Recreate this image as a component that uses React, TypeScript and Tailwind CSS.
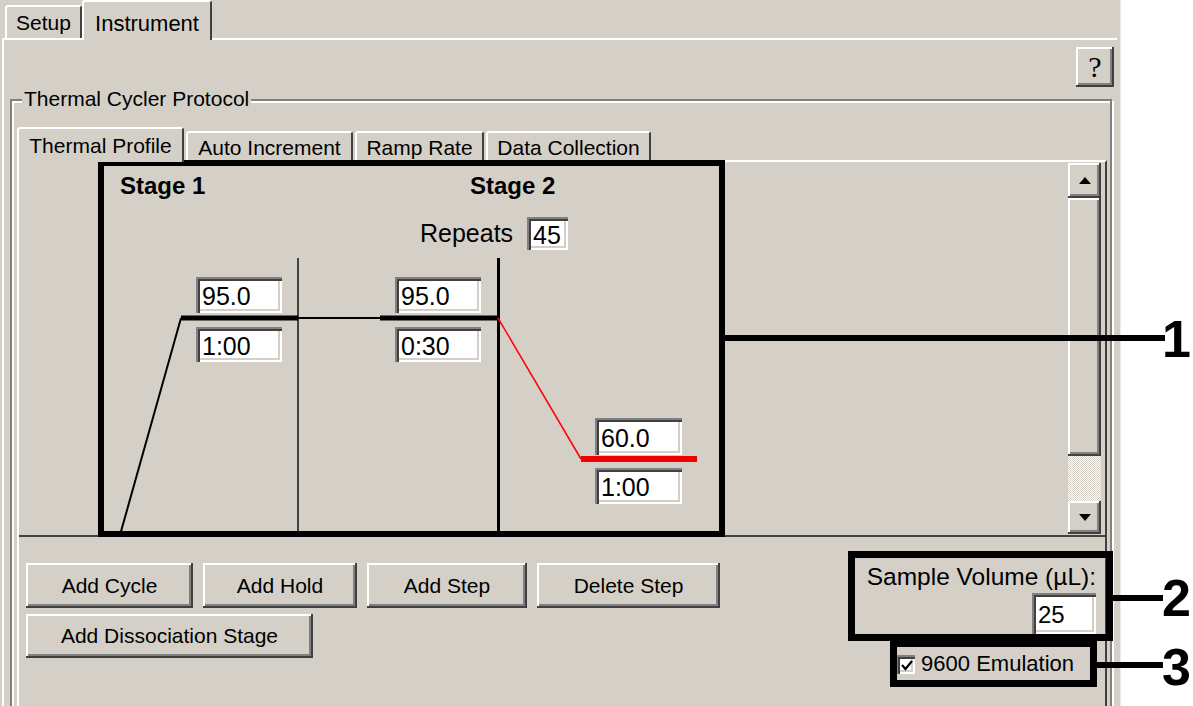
import React from 'react';

// Windows-classic bevels used throughout the dialog
const raised =
  'bg-[#d4d0c8] shadow-[inset_-2px_-2px_0_#404040,inset_2px_2px_0_#ffffff,inset_-4px_-4px_0_#808080]';
const sunken =
  'bg-white shadow-[inset_2px_2px_0_#808080,inset_4px_4px_0_#404040,inset_-2px_-2px_0_#ffffff,inset_-4px_-4px_0_#d4d0c8]';

function Field({ value, pos }: { value: string; pos: string }) {
  return (
    <div className={`absolute flex items-center pl-[6px] pt-[3px] text-[25px] leading-none text-black ${sunken} ${pos}`}>
      {value}
    </div>
  );
}

function Btn({ label, w }: { label: string; w: string }) {
  return (
    <button className={`flex items-center justify-center text-[21px] text-black ${raised} ${w}`}>
      {label}
    </button>
  );
}

function Arrow({ down }: { down?: boolean }) {
  return (
    <svg width="12" height="7" viewBox="0 0 12 7">
      <polygon points={down ? '0,0 12,0 6,7' : '0,7 12,7 6,0'} fill="#000" />
    </svg>
  );
}

function ProfileCanvas() {
  return (
    <div className="relative flex-1">
      <svg className="absolute inset-0" width="1050" height="373">
        <line x1="101" y1="373" x2="162" y2="156" stroke="#000" strokeWidth="2" />
        <line x1="279" y1="96" x2="279" y2="373" stroke="#444" strokeWidth="2" />
        <line x1="479.5" y1="96" x2="479.5" y2="373" stroke="#000" strokeWidth="3" />
        <line x1="162" y1="156" x2="279" y2="156" stroke="#000" strokeWidth="5" />
        <line x1="279" y1="156" x2="361" y2="156" stroke="#000" strokeWidth="2" />
        <line x1="361" y1="156" x2="479" y2="156" stroke="#000" strokeWidth="5" />
        <line x1="479" y1="156" x2="562" y2="297" stroke="#ff0000" strokeWidth="1.5" />
        <line x1="562" y1="297" x2="678" y2="297" stroke="#ee0000" strokeWidth="6" />
      </svg>

      <div className="absolute left-[101px] top-[12px] text-[24px] font-bold leading-none">Stage 1</div>
      <div className="absolute left-[451px] top-[12px] text-[24px] font-bold leading-none">Stage 2</div>
      <div className="absolute left-[401px] top-[59px] text-[25px] leading-none">Repeats</div>
      <Field value="45" pos="left-[508px] top-[55px] w-[41px] h-[33px]" />

      <Field value="95.0" pos="left-[177px] top-[115px] w-[86px] h-[36px]" />
      <Field value="1:00" pos="left-[177px] top-[165px] w-[86px] h-[35px]" />
      <Field value="95.0" pos="left-[376px] top-[115px] w-[86px] h-[36px]" />
      <Field value="0:30" pos="left-[376px] top-[165px] w-[86px] h-[35px]" />
      <Field value="60.0" pos="left-[576px] top-[256px] w-[87px] h-[37px]" />
      <Field value="1:00" pos="left-[576px] top-[306px] w-[87px] h-[36px]" />
    </div>
  );
}

function ScrollBar() {
  return (
    <div className="flex w-[33px] flex-col py-[1px] mr-[4px]">
      <div className={`flex h-[35px] items-center justify-center ${raised}`}>
        <Arrow />
      </div>
      <div className={`h-[258px] ${raised}`} />
      <div className="flex-1 bg-[repeating-conic-gradient(#ffffff_0_25%,#d4d0c8_0_50%)] bg-[length:2px_2px]" />
      <div className={`flex h-[33px] items-center justify-center ${raised}`}>
        <Arrow down />
      </div>
    </div>
  );
}

function Callouts() {
  return (
    <>
      <div className="absolute left-[98px] top-[160px] h-[377px] w-[627px] border-[6px] border-black" />
      <div className="absolute left-[725px] top-[335px] h-[6px] w-[440px] bg-black" />
      <div className="absolute left-[1162px] top-[313px] text-[52px] font-bold leading-none">1</div>

      <div className="absolute left-[848px] top-[551px] h-[90px] w-[265px] border-[7px] border-black" />
      <div className="absolute left-[1113px] top-[595px] h-[6px] w-[50px] bg-black" />
      <div className="absolute left-[1162px] top-[572px] text-[52px] font-bold leading-none">2</div>

      <div className="absolute left-[890px] top-[640px] h-[47px] w-[207px] border-[7px] border-black" />
      <div className="absolute left-[1097px] top-[662px] h-[6px] w-[66px] bg-black" />
      <div className="absolute left-[1162px] top-[641px] text-[52px] font-bold leading-none">3</div>
    </>
  );
}

export default function App() {
  return (
    <div className="relative h-[706px] w-[1193px] overflow-hidden bg-white font-['Liberation_Sans',Arial,sans-serif] text-black">
      <div className="flex h-full w-[1121px] flex-col border-r border-[#ecebe7] bg-[#d4d0c8] pl-[2px]">
        {/* top tabs */}
        <div className="flex h-[38px] items-end pl-[3px]">
          <div className="flex h-[33px] w-[77px] items-center justify-center rounded-t-[3px] border-l-2 border-t-2 border-r-2 border-white border-r-[#404040] text-[21px]">
            Setup
          </div>
          <div className="relative z-10 -mb-[2px] flex h-[40px] w-[130px] items-start justify-center rounded-t-[3px] border-l-2 border-t-2 border-r-2 border-white border-r-[#404040] bg-[#d4d0c8] pt-[5px] text-[22px]">
            Instrument
          </div>
        </div>

        {/* instrument pane */}
        <div className="mr-[3px] flex flex-1 flex-col border-l-2 border-t-2 border-white">
          <div className="flex justify-end pr-[3px] pt-[7px]">
            <button className={`flex h-[40px] w-[38px] items-center justify-center font-['Liberation_Serif',serif] text-[30px] leading-none ${raised}`}>
              ?
            </button>
          </div>

          <div className="relative -mb-[20px] ml-[6px] mr-[5px] mt-[12px] flex flex-1 flex-col border-2 border-[#808080] pl-[5px] pr-[3px] pt-[26px] shadow-[inset_2px_2px_0_#ffffff,2px_2px_0_#ffffff]">
            <div className="absolute -top-[14px] left-[10px] bg-[#d4d0c8] px-[2px] text-[21px] leading-[24px]">
              Thermal Cycler Protocol
            </div>

            {/* inner tabs */}
            <div className="flex h-[33px] items-end">
              <div className="relative z-10 -mb-[2px] flex h-[35px] w-[167px] items-center justify-center rounded-t-[3px] border-l-2 border-t-2 border-r-2 border-white border-r-[#404040] bg-[#d4d0c8] text-[21px]">
                Thermal Profile
              </div>
              <div className="ml-[2px] flex h-[29px] w-[167px] items-center justify-center rounded-t-[3px] border-l-2 border-t-2 border-r-2 border-white border-r-[#404040] pt-[3px] text-[21px]">
                Auto Increment
              </div>
              <div className="ml-[2px] flex h-[29px] w-[129px] items-center justify-center rounded-t-[3px] border-l-2 border-t-2 border-r-2 border-white border-r-[#404040] pt-[3px] text-[21px]">
                Ramp Rate
              </div>
              <div className="ml-[2px] flex h-[29px] w-[165px] items-center justify-center rounded-t-[3px] border-l-2 border-t-2 border-r-2 border-white border-r-[#404040] pt-[3px] text-[21px]">
                Data Collection
              </div>
            </div>

            {/* thermal profile pane */}
            <div className="flex flex-1 flex-col border-l-2 border-r-2 border-t-2 border-white border-r-[#404040]">
              <div className="flex h-[375px] border-b-2 border-[#404040]">
                <ProfileCanvas />
                <ScrollBar />
              </div>

              <div className="flex items-start justify-between pl-[7px] pr-[9px] pt-[26px]">
                <div className="flex flex-col gap-[6px]">
                  <div className="flex gap-[10px]">
                    <Btn label="Add Cycle" w="h-[45px] w-[167px]" />
                    <Btn label="Add Hold" w="h-[45px] w-[154px]" />
                    <Btn label="Add Step" w="h-[45px] w-[160px]" />
                    <Btn label="Delete Step" w="h-[45px] w-[183px]" />
                  </div>
                  <Btn label="Add Dissociation Stage" w="h-[44px] w-[287px]" />
                </div>

                <div className="flex flex-col items-end pt-[2px]">
                  <div className="text-[24.5px] leading-none">Sample Volume (µL):</div>
                  <div className={`mt-[3px] flex h-[41px] w-[64px] items-center pl-[6px] pt-[3px] text-[24px] leading-none ${sunken}`}>
                    25
                  </div>
                  <div className="mr-[22px] mt-[19px] flex h-[23px] items-center gap-[6px]">
                    <div className={`flex h-[19px] w-[19px] shrink-0 items-center justify-center pl-[2px] pt-[2px] ${sunken}`}>
                      <svg width="12" height="11" viewBox="0 0 12 11">
                        <polyline points="1,5 4.5,9 11,1" fill="none" stroke="#000" strokeWidth="2.2" />
                      </svg>
                    </div>
                    <span className="text-[22px] leading-none">9600 Emulation</span>
                  </div>
                </div>
              </div>
            </div>
          </div>
        </div>
      </div>

      <Callouts />
    </div>
  );
}
